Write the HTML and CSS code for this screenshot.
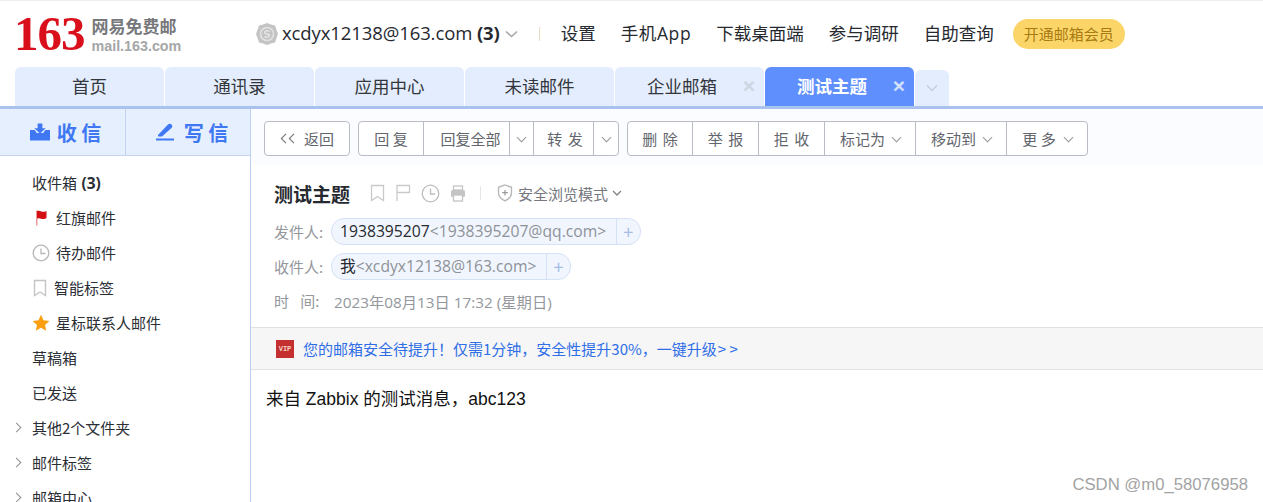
FILE: index.html
```html
<!DOCTYPE html>
<html lang="zh-CN">
<head>
    <meta charset="UTF-8">
    <title>网易免费邮</title>
    <link rel="stylesheet" href="styles.css">
</head>
<body>
    <header class="topbar">
        <div class="logo">
            <span class="logo-num">163</span>
            <div class="logo-text">
                <span class="logo-cn">网易免费邮</span>
                <span class="logo-en">mail.163.com</span>
            </div>
        </div>
        <div class="account">
            <svg class="avatar" width="24" height="24" viewBox="0 0 24 24"><polygon points="12,1 16,2.5 20,3.5 21.5,8 23,12 21.5,16 20,20.500 16,21.500 12,23 8,21.500 4,20.500 2.500,16 1,12 2.500,8 4,3.500 8,2.500" fill="#c4c4c4"/><circle cx="12" cy="12" r="6.500" fill="none" stroke="#e2e2e2" stroke-width="1.500"/><path d="M14.500 9.500c-1-1-5-1-5 1s5 1 5 3-4 2-5 1" fill="none" stroke="#e8e8e8" stroke-width="1.300"/></svg>
            <span class="account-mail">xcdyx12138@163.com <b>(3)</b></span>
            <svg class="account-arrow" width="13" height="8" viewBox="0 0 13 8"><path d="M1 1.500l5.500 5 5.500-5" fill="none" stroke="#a6a6a6" stroke-width="1.500"/></svg>
        </div>
        <span class="top-sep"></span>
        <nav class="top-nav">
            <a>设置</a>
            <a class="nav-app">手机App</a>
            <a>下载桌面端</a>
            <a>参与调研</a>
            <a>自助查询</a>
        </nav>
        <span class="vip-pill">开通邮箱会员</span>
    </header>

    <div class="tabs">
        <div class="tab">首页</div>
        <div class="tab">通讯录</div>
        <div class="tab">应用中心</div>
        <div class="tab">未读邮件</div>
        <div class="tab tab-closable">企业邮箱<span class="tab-close">×</span></div>
        <div class="tab tab-closable tab-active">测试主题<span class="tab-close">×</span></div>
        <div class="tab-more">
            <svg width="12" height="8" viewBox="0 0 12 8"><path d="M1 1.500l5 5 5-5" fill="none" stroke="#c5cfdf" stroke-width="1.500"/></svg>
        </div>
    </div>

    <div class="layout">
        <aside class="sidebar">
            <div class="compose">
                <a class="compose-btn compose-read">
                    <svg width="20" height="18" viewBox="0 0 21 18"><path d="M0 7h5l2 3h7l2-3h5v11H0z" fill="#3f78f2"/><path d="M8 0h5v5h3.500l-6 5.500-6-5.500H8z" fill="#3f78f2"/></svg>
                    <span>收 信</span>
                </a>
                <a class="compose-btn compose-write">
                    <svg width="19" height="18" viewBox="0 0 19 18"><path d="M2 12L12 1.500c1-1 2.500-1 3.500 0s1 2.500 0 3.500L6 13.500H2z" fill="#3f78f2"/><rect x="0" y="15.500" width="18" height="2" fill="#3f78f2"/></svg>
                    <span>写 信</span>
                </a>
            </div>
            <ul class="folders">
                <li class="folder"><span>收件箱 <b>(3)</b></span></li>
                <li class="folder">
                    <svg class="folder-icon" width="18" height="18" viewBox="0 0 18 18"><rect x="4" y="1.500" width="1.500" height="15" fill="#ee9a9a"/><path d="M5 2c3-1 4 1 6.500 .8 1.500 0 2.500-.4 3-.8v7c-1 .8-2 1-3.500 1C9 10 8 8.500 5 9.500z" fill="#d40f14"/></svg>
                    <span>红旗邮件</span>
                </li>
                <li class="folder">
                    <svg class="folder-icon" width="18" height="18" viewBox="0 0 18 18"><circle cx="9" cy="9" r="7.800" fill="none" stroke="#b8b8b8" stroke-width="1.300"/><path d="M9 4.500V9.500h4.500" fill="none" stroke="#b8b8b8" stroke-width="1.300"/></svg>
                    <span>待办邮件</span>
                </li>
                <li class="folder">
                    <svg class="folder-icon" width="16" height="18" viewBox="0 0 16 18"><path d="M2.500 1.500h11v15L8 13l-5.500 3.500z" fill="none" stroke="#c4c4c4" stroke-width="1.400"/></svg>
                    <span>智能标签</span>
                </li>
                <li class="folder">
                    <svg class="folder-icon" width="18" height="18" viewBox="0 0 18 18"><polygon points="9,0.800 11.500,6.200 17.400,6.900 13,10.900 14.200,16.800 9,13.800 3.800,16.800 5,10.900 0.600,6.900 6.500,6.200" fill="#fb9f10"/></svg>
                    <span>星标联系人邮件</span>
                </li>
                <li class="folder"><span>草稿箱</span></li>
                <li class="folder"><span>已发送</span></li>
                <li class="folder folder-sub"><span>其他2个文件夹</span></li>
                <li class="folder folder-sub"><span>邮件标签</span></li>
                <li class="folder folder-sub"><span>邮箱中心</span></li>
            </ul>
        </aside>

        <main class="content">
            <div class="toolbar">
                <div class="btn-group">
                    <a class="btn btn-back">
                        <svg class="back-arrows" width="15" height="11" viewBox="0 0 15 11"><path d="M6 .8L1.300 5.500 6 10.200M14 .8L9.300 5.500 14 10.200" fill="none" stroke="#777" stroke-width="1.100"/></svg>
                        <span>返回</span>
                    </a>
                </div>
                <div class="btn-group">
                    <a class="btn btn-reply">回 复</a>
                    <a class="btn btn-replyall">回复全部</a>
                    <a class="btn btn-drop"><i class="caret"></i></a>
                    <a class="btn btn-forward">转 发</a>
                    <a class="btn btn-drop btn-drop-end"><i class="caret"></i></a>
                </div>
                <div class="btn-group">
                    <a class="btn btn-action">删 除</a>
                    <a class="btn btn-action">举 报</a>
                    <a class="btn btn-action">拒 收</a>
                    <a class="btn btn-menu">标记为<i class="caret"></i></a>
                    <a class="btn btn-menu">移动到<i class="caret"></i></a>
                    <a class="btn btn-menu btn-more">更 多<i class="caret"></i></a>
                </div>
            </div>

            <div class="mail-head">
                <div class="subject-row">
                    <h1 class="subject">测试主题</h1>
                    <div class="subject-icons">
                        <svg width="15" height="18" viewBox="0 0 15 18"><path d="M1.500 1.500h12v15L7.500 12.500l-6 4z" fill="none" stroke="#c9c9c9" stroke-width="1.300"/></svg>
                        <svg width="16" height="18" viewBox="0 0 16 18"><path d="M2 17V1.500h12.500v7H2" fill="none" stroke="#c9c9c9" stroke-width="1.300"/></svg>
                        <svg width="19" height="19" viewBox="0 0 19 19"><circle cx="9.500" cy="9.500" r="8.300" fill="none" stroke="#bdbdbd" stroke-width="1.300"/><path d="M9.500 4.500v5.500h4.500" fill="none" stroke="#bdbdbd" stroke-width="1.300"/></svg>
                        <svg width="16" height="17" viewBox="0 0 16 17"><rect x="3.500" y="1" width="9" height="4" fill="none" stroke="#c4c4c4" stroke-width="1.300"/><rect x="1" y="5" width="14" height="7" rx="1.500" fill="#c4c4c4"/><rect x="3.500" y="10" width="9" height="6" fill="#fff" stroke="#c4c4c4" stroke-width="1.300"/></svg>
                    </div>
                    <span class="subject-sep"></span>
                    <svg class="shield" width="16" height="18" viewBox="0 0 16 18"><path d="M8 1l6.500 2.300v5.200c0 4-3 6.800-6.500 8.300-3.500-1.500-6.500-4.300-6.500-8.300V3.300z" fill="none" stroke="#b5b5b5" stroke-width="1.300"/><path d="M8 6v5.500M5.200 8.700h5.600" stroke="#9a9a9a" stroke-width="1.200"/></svg>
                    <span class="safe-mode">安全浏览模式</span>
                    <svg width="10" height="7" viewBox="0 0 10 7"><path d="M1 1l4 4 4-4" fill="none" stroke="#808080" stroke-width="1.300"/></svg>
                </div>
                <div class="meta-row">
                    <span class="meta-label">发件人:</span>
                    <span class="chip"><span class="chip-text"><em>1938395207</em>&lt;1938395207@qq.com&gt;</span><span class="chip-add">+</span></span>
                </div>
                <div class="meta-row">
                    <span class="meta-label">收件人:</span>
                    <span class="chip"><span class="chip-text"><em>我</em>&lt;xcdyx12138@163.com&gt;</span><span class="chip-add">+</span></span>
                </div>
                <div class="meta-row meta-row-time">
                    <span class="meta-label meta-time">时 间:</span>
                    <span class="meta-value">2023年08月13日 17:32 (星期日)</span>
                </div>
            </div>

            <div class="notice">
                <span class="vip-tag">VIP</span>
                <a class="notice-link">您的邮箱安全待提升！仅需1分钟，安全性提升30%，一键升级<span class="notice-more">&gt;&gt;</span></a>
            </div>

            <div class="mail-body">来自 Zabbix 的测试消息，abc123</div>
        </main>
    </div>

    <div class="watermark">CSDN @m0_58076958</div>
</body>
</html>
```

FILE: styles.css
```css
html, body {
    margin: 0;
    padding: 0;
    height: 100%;
    overflow: hidden;
}
body {
    position: relative;
    background-color: #fff;
    color: #26292f;
    font-family: "Open Sans", "Noto Sans CJK SC", sans-serif;
    font-size: 14px;
}

.topbar {
    display: flex;
    align-items: center;
    height: 66px;
    padding-left: 14px;
    border-top: 1px solid #eeeeee;
    box-sizing: content-box;
}
.logo {
    display: flex;
    align-items: center;
    width: 241px;
}
.logo-num {
    color: #d90f1b;
    font-family: "Liberation Serif", serif;
    font-size: 49px;
    font-weight: bold;
    letter-spacing: -1px;
    line-height: 40px;
}
.logo-text {
    display: flex;
    flex-direction: column;
    margin-left: 7px;
    color: #77787b;
    font-weight: bold;
}
.logo-cn {
    font-family: "Noto Sans CJK SC", sans-serif;
    font-size: 17px;
    line-height: 23px;
}
.logo-en {
    font-family: "Liberation Sans", sans-serif;
    font-size: 14.300px;
    line-height: 18px;
    color: #a5a6a8;
}

.account {
    display: flex;
    align-items: center;
}
.avatar {
    margin-right: 3px;
}
.account-mail {
    margin-bottom: 3px;
    font-size: 18.500px;
    letter-spacing: -0.1px;
}
.account-arrow {
    margin-left: 5px;
}
.top-sep {
    width: 1px;
    height: 14px;
    margin: 0 21px 0 21px;
    background-color: #e8dcc6;
}
.top-nav {
    display: flex;
    gap: 25px;
    margin-bottom: 3px;
    font-family: "Open Sans", "Noto Sans CJK SC", sans-serif;
    font-size: 17.500px;
}
.nav-app {
    letter-spacing: 0.6px;
}
.vip-pill {
    margin-left: 19px;
    padding: 0 11px;
    height: 30px;
    line-height: 30px;
    border-radius: 15px;
    background-color: #fbd568;
    color: #a97a12;
    font-family: "Noto Sans CJK SC", sans-serif;
    font-size: 15px;
    white-space: nowrap;
}

.tabs {
    display: flex;
    align-items: flex-end;
    gap: 1px;
    height: 39px;
    padding-left: 15px;
    border-bottom: 3px solid #a9c2ee;
}
.tab {
    position: relative;
    width: 149px;
    height: 39px;
    box-sizing: border-box;
    line-height: 38px;
    text-align: center;
    border-radius: 6px 6px 0 0;
    background-color: #e3edfd;
    font-family: "Noto Sans CJK SC", sans-serif;
    font-size: 17.500px;
    color: #33363c;
}
.tab-closable {
    padding-right: 15px;
}
.tab-active {
    background-color: #5f8ffd;
    color: #fff;
    font-weight: bold;
}
.tab-close {
    position: absolute;
    top: 0;
    right: 9px;
    color: #ccd5e3;
    font-family: "Liberation Sans", sans-serif;
    font-size: 21px;
    font-weight: bold;
}
.tab-active .tab-close {
    color: #d5e2fb;
}
.tab-more {
    display: flex;
    align-items: center;
    justify-content: center;
    width: 34px;
    height: 36px;
    border-radius: 6px 6px 0 0;
    background-color: #e3edfd;
}

.layout {
    display: flex;
    height: 393px;
}
.sidebar {
    flex: none;
    width: 250px;
    border-right: 1px solid #bdd0f2;
}
.compose {
    display: flex;
    height: 46px;
    background-color: #e6effd;
    border-bottom: 1px solid #c4d4f0;
    box-sizing: content-box;
}
.compose-btn {
    display: flex;
    align-items: center;
    justify-content: center;
    flex: none;
    box-sizing: border-box;
    color: #3f78f2;
    font-family: "Noto Sans CJK SC", sans-serif;
    font-size: 20px;
    font-weight: bold;
}
.compose-read {
    gap: 7px;
    width: 126px;
    padding-left: 6px;
    border-right: 1px solid #c4d4f0;
}
.compose-write {
    gap: 9px;
    width: 124px;
    padding-left: 8px;
}
.folders {
    list-style: none;
    margin: 9px 0 0;
    padding: 0;
}
.folder {
    position: relative;
    display: flex;
    align-items: center;
    gap: 6px;
    height: 35px;
    padding-left: 32px;
    white-space: nowrap;
    font-family: "Noto Sans CJK SC", sans-serif;
    font-size: 15px;
    color: #2b2e35;
}
.folder b {
    margin-left: 1px;
    font-family: "Open Sans", sans-serif;
    font-size: 15.500px;
}
.folder-icon {
    flex: none;
}
.folder-sub::before {
    content: "";
    position: absolute;
    left: 13px;
    top: 14px;
    width: 6px;
    height: 6px;
    border-top: 1.500px solid #8f8f8f;
    border-right: 1.500px solid #8f8f8f;
    transform: rotate(45deg);
}

.content {
    flex: 1;
    min-width: 0;
}
.toolbar {
    display: flex;
    gap: 8px;
    height: 56px;
    padding: 12px 0 0 13px;
    box-sizing: border-box;
    background-color: #fafcff;
}
.btn-group {
    display: flex;
    height: 35px;
    box-sizing: border-box;
    background-color: #fff;
    border: 1px solid #b9bcc4;
    border-radius: 4px;
}
.btn {
    display: flex;
    align-items: center;
    justify-content: center;
    box-sizing: border-box;
    border-left: 1px solid #b9bcc4;
    font-family: "Noto Sans CJK SC", sans-serif;
    font-size: 15px;
    color: #62656b;
}
.btn:first-child {
    border-left: none;
}
.btn-back { width: 84px; }
.back-arrows {
    margin-right: 9px;
}
.btn-reply { width: 64px; }
.btn-replyall {
    width: 86px;
    padding-left: 8px;
}
.btn-drop { width: 24px; }
.btn-forward {
    width: 60px;
    padding-left: 3px;
    word-spacing: 2px;
}
.btn-drop-end { width: 25px; }
.btn-action {
    width: 66px;
    word-spacing: 2px;
}
.btn-action:first-child { width: 64px; }
.btn-menu {
    gap: 8px;
    width: 91px;
}
.btn-more {
    width: 81px;
    gap: 9px;
}
.caret {
    width: 6px;
    height: 6px;
    margin-top: -3px;
    border-right: 1.500px solid #95979c;
    border-bottom: 1.500px solid #95979c;
    transform: rotate(45deg);
}

.mail-head {
    height: 162px;
    padding: 14px 0 0 23px;
    box-sizing: border-box;
}
.subject-row {
    display: flex;
    align-items: center;
    height: 28px;
    margin-bottom: 7px;
}
.subject {
    margin: 0;
    font-family: "Noto Sans CJK SC", sans-serif;
    font-size: 19px;
    font-weight: bold;
    color: #26292f;
}
.subject-icons {
    display: flex;
    align-items: center;
    gap: 10px;
    margin-left: 20px;
}
.subject-sep {
    width: 1px;
    height: 14px;
    margin: 0 16px 0 14px;
    background-color: #e6e6e6;
}
.shield {
    margin-right: 5px;
}
.safe-mode {
    margin-right: 4px;
    font-family: "Noto Sans CJK SC", sans-serif;
    font-size: 15px;
    color: #75787e;
}
.meta-row {
    display: flex;
    align-items: center;
    gap: 5px;
    height: 35px;
    font-family: "Noto Sans CJK SC", sans-serif;
    font-size: 15px;
    color: #94979c;
}
.meta-row-time {
    margin-top: -1px;
}
.meta-label {
    width: 52px;
    white-space: nowrap;
}
.meta-time {
    word-spacing: 8px;
}
.meta-value {
    margin-left: 3px;
    font-family: "Open Sans", "Noto Sans CJK SC", sans-serif;
    font-size: 15.300px;
}
.chip {
    display: flex;
    height: 27px;
    box-sizing: border-box;
    background-color: #f1f6fe;
    border: 1px solid #d5e1f6;
    border-radius: 13px;
}
.chip-text {
    padding: 0 9.500px 0 8px;
    line-height: 25px;
    font-family: "Open Sans", "Noto Sans CJK SC", sans-serif;
    font-size: 15.700px;
    color: #8e9298;
}
.chip-text em {
    font-style: normal;
    color: #26292f;
}
.chip-add {
    width: 23px;
    line-height: 24px;
    text-align: center;
    border-left: 1px solid #d5e1f6;
    color: #a7bde6;
    font-size: 18px;
}

.notice {
    display: flex;
    align-items: center;
    gap: 9px;
    height: 43px;
    padding-left: 25px;
    box-sizing: border-box;
    background-color: #f6f6f6;
    border-top: 1px solid #e1e1e1;
    border-bottom: 1px solid #e1e1e1;
}
.vip-tag {
    width: 18px;
    height: 18px;
    line-height: 18px;
    text-align: center;
    background-color: #c42f2f;
    color: #f4d2c8;
    font-family: "Liberation Mono", monospace;
    font-size: 7px;
    font-weight: bold;
}
.notice-link {
    font-family: "Noto Sans CJK SC", sans-serif;
    font-size: 15px;
    color: #2f6ee6;
}
.notice-more {
    margin-left: 1px;
    letter-spacing: 3.500px;
}
.mail-body {
    padding: 15px 0 0 15px;
    font-family: "Liberation Sans", "Noto Sans CJK SC", sans-serif;
    font-size: 17.500px;
    color: #111;
}

.watermark {
    position: absolute;
    right: 15px;
    bottom: 7px;
    color: #a3a3a3;
    font-family: "Liberation Sans", sans-serif;
    font-size: 16.700px;
}
```
